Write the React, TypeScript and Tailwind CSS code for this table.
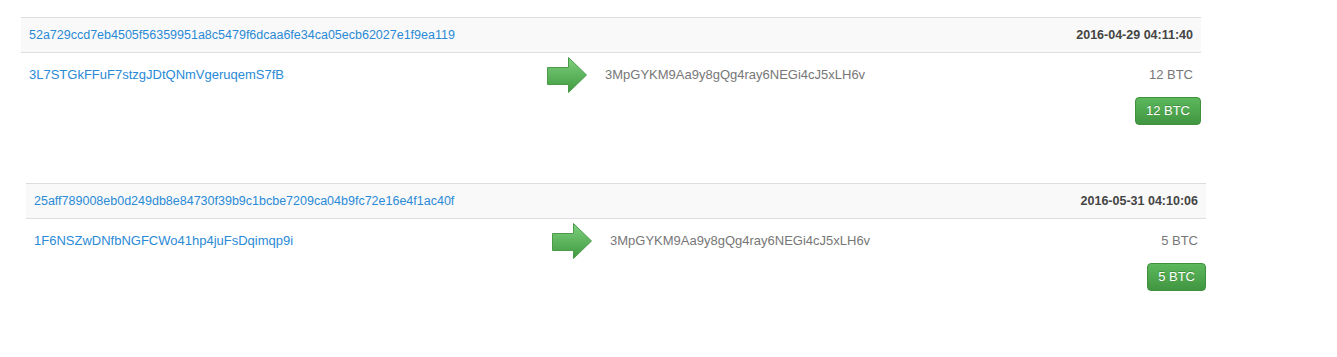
const transfers = [
  {
    txid: "52a729ccd7eb4505f56359951a8c5479f6dcaa6fe34ca05ecb62027e1f9ea119",
    time: "2016-04-29 04:11:40",
    from: "3L7STGkFFuF7stzgJDtQNmVgeruqemS7fB",
    to: "3MpGYKM9Aa9y8gQg4ray6NEGi4cJ5xLH6v",
    amount: "12 BTC",
  },
  {
    txid: "25aff789008eb0d249db8e84730f39b9c1bcbe7209ca04b9fc72e16e4f1ac40f",
    time: "2016-05-31 04:10:06",
    from: "1F6NSZwDNfbNGFCWo41hp4juFsDqimqp9i",
    to: "3MpGYKM9Aa9y8gQg4ray6NEGi4cJ5xLH6v",
    amount: "5 BTC",
  },
];

const Arrow = ({ id }: { id: string }) => (
  <svg width="40" height="36" viewBox="0 0 40 36">
    <defs>
      <linearGradient id={id} x1="0" y1="0" x2="0" y2="1">
        <stop offset="0" stopColor="#7fd07f" />
        <stop offset="1" stopColor="#3e9a3e" />
      </linearGradient>
    </defs>
    <path
      d="M0.5 10.5 H21.5 V0.5 L39.5 18 L21.5 35.5 V27.5 H0.5 Z"
      fill={`url(#${id})`}
      stroke="#4a9a4a"
      strokeWidth="1"
    />
  </svg>
);

const Transfer = ({ tx, i }: { tx: (typeof transfers)[number]; i: number }) => (
  <div className="w-[1180px] text-[13px]">
    <div className="flex items-center justify-between border-y border-[#dddddd] bg-[#f9f9f9] px-2 py-2 text-[12.5px] leading-[18px]">
      <a className="text-[#2a8ad6]">{tx.txid}</a>
      <span className="font-bold text-[#444444]">{tx.time}</span>
    </div>
    <div className="flex items-center py-1">
      <div className="w-[526px] pl-2">
        <a className="text-[#2a8ad6]">{tx.from}</a>
      </div>
      <div className="w-[58px]">
        <Arrow id={`arr${i}`} />
      </div>
      <div className="flex flex-1 justify-between pr-2 text-[#777777]">
        <span>{tx.to}</span>
        <span>{tx.amount}</span>
      </div>
    </div>
    <div className="flex justify-end">
      <span className="rounded-[4px] border border-[#3e8f3e] bg-gradient-to-b from-[#5cb85c] to-[#419641] px-[10px] leading-[26px] text-white text-shadow-[0_-1px_0_rgba(0,0,0,0.2)]">
        {tx.amount}
      </span>
    </div>
  </div>
);

export default function App() {
  return (
    <div className="h-[357px] bg-white pt-[17px] pl-[21px] font-['Liberation_Sans',Arial,sans-serif]">
      <Transfer tx={transfers[0]} i={0} />
      <div className="mt-[58px] ml-[5px]">
        <Transfer tx={transfers[1]} i={1} />
      </div>
    </div>
  );
}
